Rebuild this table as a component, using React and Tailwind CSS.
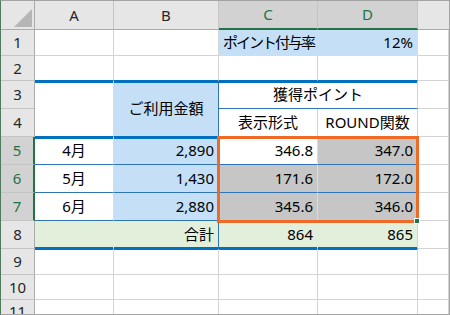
import React from "react";

const FONT = "font-['Noto_Sans','Noto_Sans_CJK_JP',sans-serif]";

function ColHead({ label, active = false, last = false }) {
  return (
    <div
      className={`flex items-center justify-center border-b ${last ? "" : "border-r border-r-[#c4c4c4]"} ${
        active
          ? "bg-[#d2d2d2] text-[#217346] border-b-2 border-b-[#217346]"
          : "bg-[#e6e6e6] text-[#262626] border-b-[#ababab]"
      }`}
    >
      {label}
    </div>
  );
}

function RowHead({ n, active = false }) {
  return (
    <div
      className={`flex items-center justify-center border-b border-b-[#c4c4c4] ${
        active
          ? "bg-[#d2d2d2] text-[#217346] border-r-2 border-r-[#217346]"
          : "bg-[#e6e6e6] text-[#262626] border-r border-r-[#ababab]"
      }`}
    >
      {n}
    </div>
  );
}

function Cell({ r = "border-r-[#d4d4d4]", b = "border-b-[#d4d4d4]", className = "", children }) {
  return (
    <div className={`flex items-center px-1 border-r border-b ${r} ${b} ${className}`}>
      {children}
    </div>
  );
}

export default function App() {
  return (
    <div
      className={`w-[450px] h-[315px] overflow-hidden bg-white border border-[#a3a3a3] border-l-[#4f7a5e] text-[15px] text-black ${FONT}`}
    >
      <div className="grid h-full grid-cols-[34px_79px_105px_99px_100px_1fr] grid-rows-[29px_26px_25px_28px_28px_28px_28px_28px_28px_26px_25px_1fr]">
        {/* column headers */}
        <div className="relative bg-[#e6e6e6] border-r border-b border-r-[#ababab] border-b-[#ababab]">
          <svg className="absolute right-[2px] bottom-[2px]" width="18" height="18" viewBox="0 0 18 18">
            <polygon points="18,0 18,18 0,18" fill="#b5b5b5" />
          </svg>
        </div>
        <ColHead label="A" />
        <ColHead label="B" />
        <ColHead label="C" active />
        <ColHead label="D" active />
        <ColHead label="" last />

        {/* 1 */}
        <RowHead n={1} />
        <Cell />
        <Cell />
        <Cell className="bg-[#c5dff6]" r="border-r-[#c5dff6]" b="border-b-[#c5dff6]">
          <span className="whitespace-nowrap tracking-[-2px]">ポイント付与率</span>
        </Cell>
        <Cell className="bg-[#c5dff6] justify-end" r="border-r-[#c5dff6]" b="border-b-[#c5dff6]">
          12%
        </Cell>
        <Cell />

        {/* 2 */}
        <RowHead n={2} />
        <Cell b="border-b-[#0070c0]" />
        <Cell b="border-b-[#0070c0]" />
        <Cell b="border-b-[#0070c0]" />
        <Cell b="border-b-[#0070c0]" />
        <Cell />

        {/* 3 - 4 */}
        <RowHead n={3} />
        <Cell
          className="row-span-2 shadow-[inset_0_2px_0_#0070c0]"
          r="border-r-[#c5dff6]"
          b="border-b-[#0070c0]"
        />
        <Cell
          className="row-span-2 bg-[#c5dff6] justify-center shadow-[inset_0_2px_0_#0070c0]"
          r="border-r-[#2f75b5]"
          b="border-b-[#0070c0]"
        >
          ご利用金額
        </Cell>
        <Cell className="col-span-2 justify-center shadow-[inset_0_2px_0_#0070c0]" b="border-b-[#2f75b5]">
          獲得ポイント
        </Cell>
        <Cell />
        <RowHead n={4} />
        <Cell className="justify-center">表示形式</Cell>
        <Cell className="justify-center">ROUND関数</Cell>
        <Cell />

        {/* 5 */}
        <RowHead n={5} active />
        <Cell className="justify-center shadow-[inset_0_2px_0_#0070c0]" r="border-r-[#c5dff6]" b="border-b-[#2f75b5]">
          4月
        </Cell>
        <Cell className="justify-end bg-[#c5dff6] shadow-[inset_0_2px_0_#0070c0]" r="border-r-[#2f75b5]" b="border-b-[#2f75b5]">
          2,890
        </Cell>
        <Cell className="relative justify-end" r="border-r-[#dadada]" b="border-b-[#2f75b5]">
          346.8
          {/* selection frame over C5:D7 */}
          <div className="absolute -left-[2px] -top-[1px] w-[202px] h-[87px] border-[3px] border-[#ee6a26] pointer-events-none">
            <div className="absolute -right-[4px] -bottom-[4px] w-[6px] h-[6px] bg-[#217346] border border-white" />
          </div>
        </Cell>
        <Cell className="justify-end bg-[#c6c6c6]" b="border-b-[#2f75b5]">
          347.0
        </Cell>
        <Cell />

        {/* 6 */}
        <RowHead n={6} active />
        <Cell className="justify-center" r="border-r-[#c5dff6]" b="border-b-[#2f75b5]">
          5月
        </Cell>
        <Cell className="justify-end bg-[#c5dff6]" r="border-r-[#2f75b5]" b="border-b-[#2f75b5]">
          1,430
        </Cell>
        <Cell className="justify-end bg-[#c6c6c6]" r="border-r-[#dadada]" b="border-b-[#2f75b5]">
          171.6
        </Cell>
        <Cell className="justify-end bg-[#c6c6c6]" b="border-b-[#2f75b5]">
          172.0
        </Cell>
        <Cell />

        {/* 7 */}
        <RowHead n={7} active />
        <Cell className="justify-center" r="border-r-[#c5dff6]" b="border-b-[#2f75b5]">
          6月
        </Cell>
        <Cell className="justify-end bg-[#c5dff6]" r="border-r-[#2f75b5]" b="border-b-[#2f75b5]">
          2,880
        </Cell>
        <Cell className="justify-end bg-[#c6c6c6]" r="border-r-[#dadada]" b="border-b-[#2f75b5]">
          345.6
        </Cell>
        <Cell className="justify-end bg-[#c6c6c6]" b="border-b-[#2f75b5]">
          346.0
        </Cell>
        <Cell />

        {/* 8: totals */}
        <RowHead n={8} />
        <Cell className="bg-[#e2efda] shadow-[inset_0_-1px_0_#0070c0]" r="border-r-[#e2efda]" b="border-b-[#0070c0]" />
        <Cell className="justify-end bg-[#e2efda] shadow-[inset_0_-1px_0_#0070c0]" r="border-r-[#2f75b5]" b="border-b-[#0070c0]">
          合計
        </Cell>
        <Cell className="justify-end bg-[#e2efda] shadow-[inset_0_-1px_0_#0070c0]" r="border-r-[#e2efda]" b="border-b-[#0070c0]">
          864
        </Cell>
        <Cell className="justify-end bg-[#e2efda] shadow-[inset_0_-1px_0_#0070c0]" b="border-b-[#0070c0]">
          865
        </Cell>
        <Cell />

        {/* 9 - 11 */}
        <RowHead n={9} />
        <Cell className="shadow-[inset_0_1px_0_#0070c0]" />
        <Cell className="shadow-[inset_0_1px_0_#0070c0]" />
        <Cell className="shadow-[inset_0_1px_0_#0070c0]" />
        <Cell className="shadow-[inset_0_1px_0_#0070c0]" />
        <Cell />
        <RowHead n={10} />
        <Cell />
        <Cell />
        <Cell />
        <Cell />
        <Cell />
        <RowHead n={11} />
        <Cell />
        <Cell />
        <Cell />
        <Cell />
        <Cell />
      </div>
    </div>
  );
}
